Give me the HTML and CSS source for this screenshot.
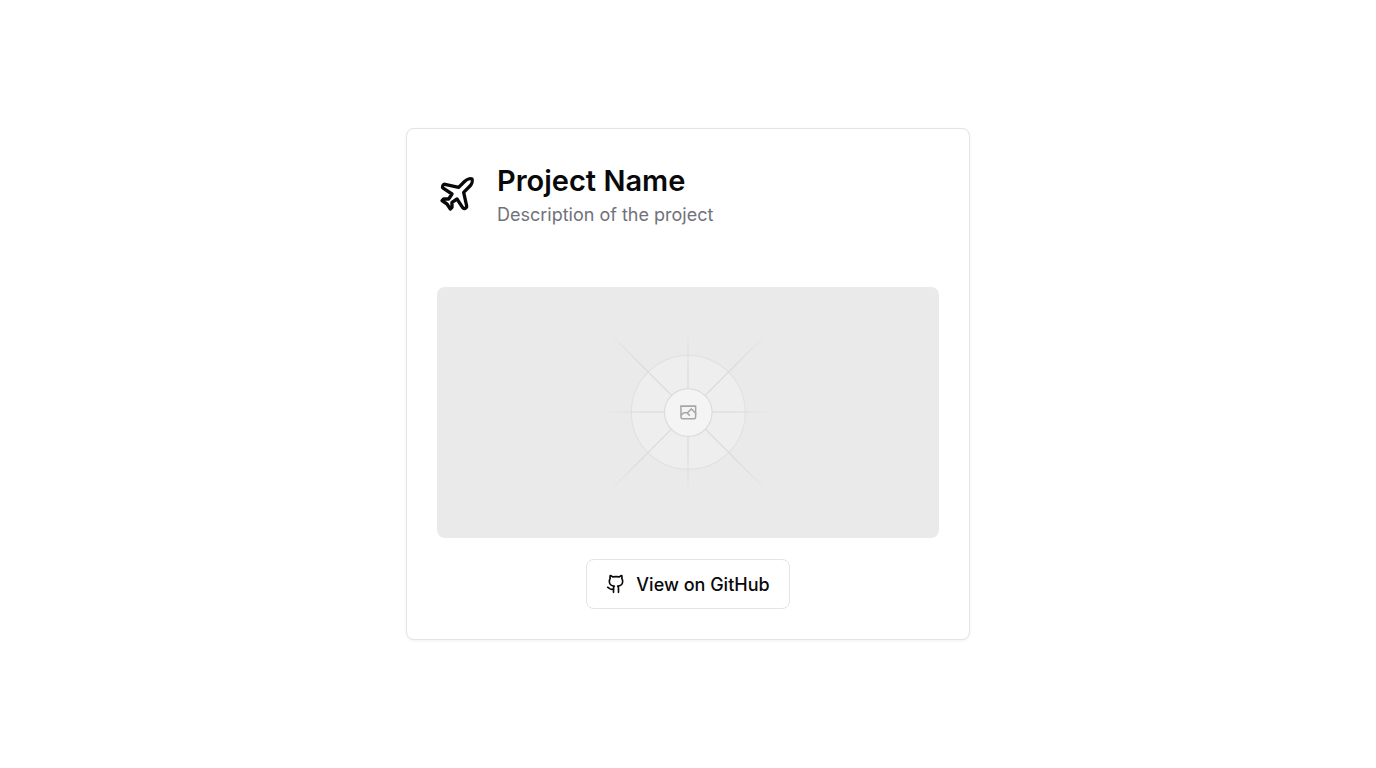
FILE: index.html
```html
<!DOCTYPE html>
<html lang="en">
<head>
<meta charset="utf-8">
<meta name="viewport" content="width=device-width, initial-scale=1">
<title>Project Name</title>
<link rel="stylesheet" href="styles.css">
</head>
<body>
<main class="page">
  <article class="card">
    <header class="card-header">
      <svg class="plane" viewBox="0 0 24 24" aria-hidden="true"><path d="M17.8 19.2 16 11l3.5-3.5C21 6 21.5 4 21 3c-1-.5-3 0-4.5 1.5L13 8 4.8 6.2c-.5-.1-.9.1-1.1.5l-.3.5c-.2.5-.1 1 .3 1.3L9 12l-2 3H4l-1 1 3 2 2 3 1-1v-3l3-2 3.5 5.3c.3.4.8.5 1.3.3l.5-.2c.4-.3.6-.7.5-1.2z"/></svg>
      <div class="heading">
        <h1 class="title">Project Name</h1>
        <p class="description">Description of the project</p>
      </div>
    </header>
    <div class="card-content">
      <svg class="preview" viewBox="0 300 1200 600" role="img" aria-label="Project preview">
        <defs>
          <linearGradient id="fade" gradientUnits="userSpaceOnUse" x1="407" y1="0" x2="793" y2="0">
            <stop stop-color="#c9c9c9" stop-opacity="0"/>
            <stop offset=".208" stop-color="#c9c9c9"/>
            <stop offset=".792" stop-color="#c9c9c9"/>
            <stop offset="1" stop-color="#c9c9c9" stop-opacity="0"/>
          </linearGradient>
          <linearGradient id="fade-long" gradientUnits="userSpaceOnUse" x1="332" y1="0" x2="868" y2="0">
            <stop stop-color="#c9c9c9" stop-opacity="0"/>
            <stop offset=".208" stop-color="#c9c9c9"/>
            <stop offset=".792" stop-color="#c9c9c9"/>
            <stop offset="1" stop-color="#c9c9c9" stop-opacity="0"/>
          </linearGradient>
        </defs>
        <rect y="300" width="1200" height="600" fill="#eaeaea"/>
        <g opacity=".5" stroke-width="2.418">
          <circle cx="600.7" cy="599.9" r="136" fill="#fafafa" stroke="#c9c9c9" opacity=".5"/>
          <path stroke="url(#fade-long)" d="M332 598h536v.01" transform="rotate(45 600 598)"/>
          <path stroke="url(#fade)" d="M407 598.7h386v.01"/>
          <path stroke="url(#fade)" d="M407 600h386v.01" transform="rotate(90 600 600)"/>
          <path stroke="url(#fade-long)" d="M332 600h536v.01" transform="rotate(-45 600 600)"/>
          <circle cx="600.7" cy="600" r="56.8" fill="#fff" stroke="#c9c9c9"/>
          <path fill="#666" fill-rule="evenodd" d="M616.426 586.58h-31.434v16.176l3.553-3.554.531-.531h9.068l.074-.074 8.463-8.463h2.565l7.18 7.181V586.58Zm-15.715 14.654 3.698 3.699 1.283 1.282-2.565 2.565-1.282-1.283-5.2-5.199h-6.066l-5.514 5.514-.073.073v2.876a2.418 2.418 0 0 0 2.418 2.418h26.598a2.418 2.418 0 0 0 2.418-2.418v-8.317l-8.463-8.463-7.181 7.181-.071.072Zm-19.347 5.442v4.085a6.045 6.045 0 0 0 6.046 6.045h26.598a6.044 6.044 0 0 0 6.045-6.045v-7.108l1.356-1.355-1.282-1.283-.074-.073v-17.989h-38.689v23.43l-.146.146.146.147Z"/>
        </g>
      </svg>
      <a class="button" href="#github">
        <svg class="github" viewBox="0 0 24 24" aria-hidden="true"><path d="M15 22v-4a4.8 4.8 0 0 0-1-3.5c3 0 6-2 6-5.5.08-1.25-.27-2.48-1-3.5.28-1.15.28-2.35 0-3.5 0 0-1 0-3 1.5-2.64-.5-5.36-.5-8 0C6 2 5 2 5 2c-.3 1.15-.3 2.35 0 3.5A5.403 5.403 0 0 0 4 9c0 3.5 3 5.5 6 5.5-.39.49-.68 1.05-.85 1.65-.17.6-.22 1.23-.15 1.85v4"/><path d="M9 18c-4.51 2-5-2-7-2"/></svg>
        View on GitHub
      </a>
    </div>
  </article>
</main>
</body>
</html>
```
FILE: styles.css
```css
* {
  box-sizing: border-box;
}

body {
  margin: 0;
  font-family: Inter, "Liberation Sans", sans-serif;
  color: #09090b;
  background: #fff;
}

.page {
  min-height: 100vh;
  display: flex;
  align-items: center;
  justify-content: center;
}

.card {
  width: 100%;
  max-width: 564px;
  border: 1px solid #e4e4e7;
  border-radius: 8px;
  background: #fff;
  box-shadow: 0 1px 3px rgba(0, 0, 0, 0.06);
}

.card-header {
  display: flex;
  align-items: center;
  gap: 20px;
  padding: 30px;
}

.plane {
  flex: none;
  width: 40px;
  height: 40px;
  fill: none;
  stroke: currentColor;
  stroke-width: 2;
  stroke-linecap: round;
  stroke-linejoin: round;
}

.heading {
  display: flex;
  flex-direction: column;
  gap: 3px;
  padding-top: 4px;
}

.title {
  margin: 0;
  font-size: 29px;
  line-height: 36px;
  font-weight: 600;
}

.description {
  margin: 0;
  font-size: 18px;
  line-height: 26px;
  color: #71717a;
}

.card-content {
  display: flex;
  flex-direction: column;
  align-items: center;
  gap: 21px;
  padding: 29px 30px 30px;
}

.preview {
  display: block;
  width: 100%;
  border-radius: 8px;
}

.button {
  display: inline-flex;
  align-items: center;
  gap: 10px;
  height: 50px;
  padding: 0 19px;
  border: 1px solid #e4e4e7;
  border-radius: 8px;
  background: #fff;
  color: inherit;
  font-size: 18px;
  font-weight: 500;
  text-decoration: none;
}

.github {
  width: 20px;
  height: 20px;
  fill: none;
  stroke: currentColor;
  stroke-width: 2;
  stroke-linecap: round;
  stroke-linejoin: round;
}
```
